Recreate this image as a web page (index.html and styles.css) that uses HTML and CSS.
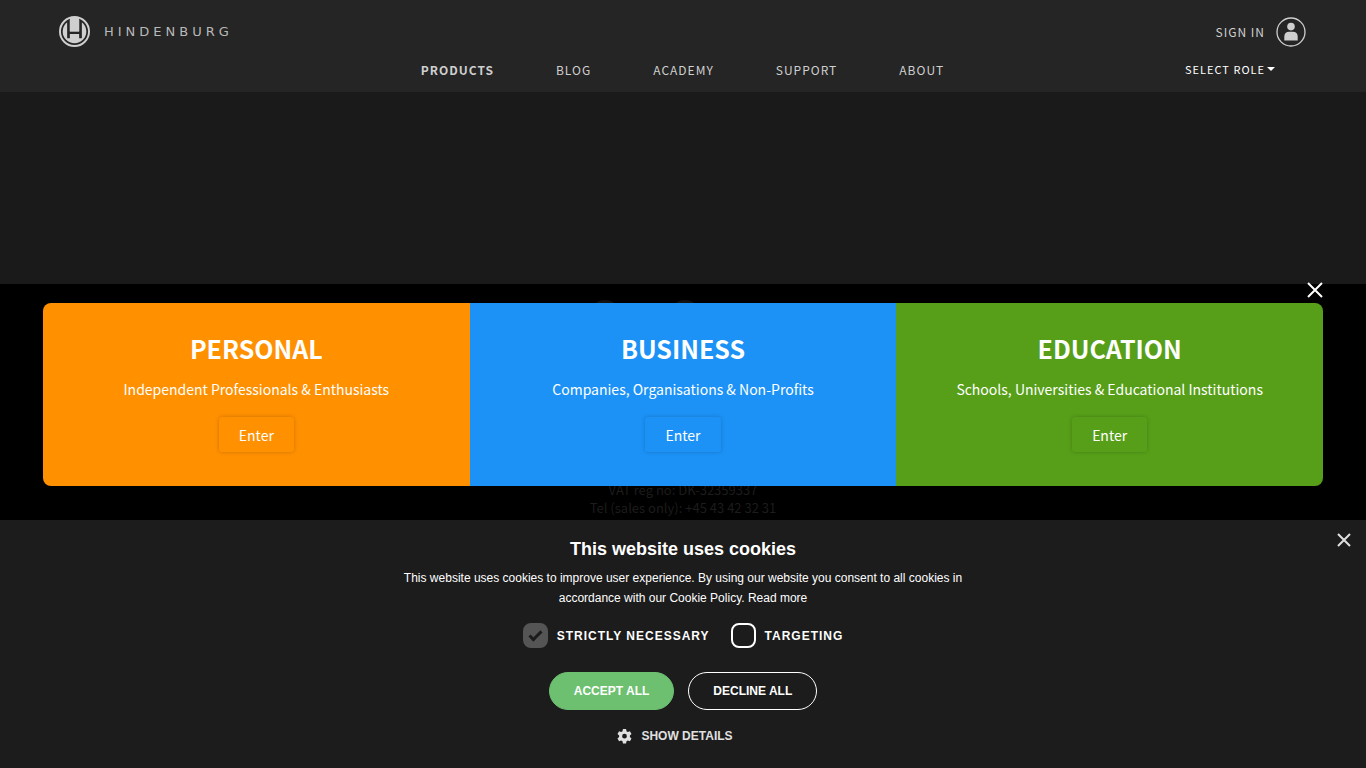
FILE: index.html
```html
<!DOCTYPE html>
<html lang="en">

<head>
    <title>Hindenburg</title>
    <meta charset="utf-8">
    <meta name="viewport" content="width=device-width, initial-scale=1.0">
    <link rel="stylesheet" href="styles.css">
</head>

<body>

    <header class="site-header">
        <div class="top-row">
            <a class="logo" href="#">
                <svg class="logo-mark" viewBox="0 0 32 32">
                    <circle cx="16" cy="16" r="15" fill="none" stroke="#cfcfcf" stroke-width="2" />
                    <circle cx="16" cy="16" r="12.2" fill="#cfcfcf" />
                    <path d="M9.8 5v18M22.2 5v18M9.8 17.3h12.4" fill="none" stroke="#252525" stroke-width="2.8" />
                    <path d="M11.2 1.5h9.6v14.4h-9.6z" fill="#cfcfcf" />
                </svg>
                <span class="wordmark">HINDENBURG</span>
            </a>
            <a class="sign-in" href="#">
                SIGN IN
                <svg class="avatar" viewBox="0 0 30 30">
                    <circle cx="15" cy="15" r="14" fill="none" stroke="#cfcfcf" stroke-width="1.3" />
                    <circle cx="15" cy="9.6" r="3.8" fill="#cfcfcf" />
                    <path d="M8.3 23.6v-3.8q0-5 5-5h3.4q5 0 5 5v3.8z" fill="#cfcfcf" />
                </svg>
            </a>
        </div>
        <div class="nav-row">
            <nav>
                <a class="active" href="#">PRODUCTS</a>
                <a href="#">BLOG</a>
                <a href="#">ACADEMY</a>
                <a href="#">SUPPORT</a>
                <a href="#">ABOUT</a>
            </nav>
            <button class="role-btn" type="button">SELECT ROLE<span class="caret"></span></button>
        </div>
    </header>

    <main></main>

    <footer>
        <div class="social">
            <span class="dot"></span>
            <span class="dot"></span>
        </div>
        <div class="company">
            <p>VAT reg no: DK-32359337</p>
            <p>Tel (sales only): +45 43 42 32 31</p>
        </div>
    </footer>

    <!-- role picker -->
    <div class="overlay">
        <div class="picker">
            <button class="close" type="button" aria-label="Close">
                <svg viewBox="0 0 16 16"><path d="M1 1l14 14M15 1L1 15" /></svg>
            </button>
            <div class="roles">
                <section class="role personal">
                    <h2>PERSONAL</h2>
                    <p>Independent Professionals &amp; Enthusiasts</p>
                    <button type="button">Enter</button>
                </section>
                <section class="role business">
                    <h2>BUSINESS</h2>
                    <p>Companies, Organisations &amp; Non-Profits</p>
                    <button type="button">Enter</button>
                </section>
                <section class="role education">
                    <h2>EDUCATION</h2>
                    <p>Schools, Universities &amp; Educational Institutions</p>
                    <button type="button">Enter</button>
                </section>
            </div>
        </div>
    </div>

    <!-- cookie banner -->
    <div class="cookies">
        <button class="cookies-close" type="button" aria-label="Close">
            <svg viewBox="0 0 14 14"><path d="M1 1l12 12M13 1L1 13" /></svg>
        </button>
        <h3>This website uses cookies</h3>
        <p>This website uses cookies to improve user experience. By using our website you consent to all cookies in accordance with our Cookie Policy. <a href="#">Read more</a></p>
        <div class="options">
            <label><input type="checkbox" checked disabled>STRICTLY NECESSARY</label>
            <label><input type="checkbox">TARGETING</label>
        </div>
        <div class="actions">
            <button class="accept" type="button">ACCEPT ALL</button>
            <button class="decline" type="button">DECLINE ALL</button>
        </div>
        <button class="details" type="button">
            <svg viewBox="0 0 24 24">
                <path fill-rule="evenodd" d="M9.5 0h5l.7 3.4 2.2 1.3 3.3-1.1 2.5 4.3-2.6 2.3v2.6l2.6 2.3-2.5 4.3-3.3-1.1-2.2 1.3-.7 3.4h-5l-.7-3.4-2.2-1.3-3.3 1.1L.8 15.1l2.6-2.3v-2.6L.8 7.9l2.5-4.3 3.3 1.1 2.2-1.3zM12 7.7a3.8 3.8 0 1 0 0 7.6a3.8 3.8 0 1 0 0-7.6z" />
            </svg>
            SHOW DETAILS
        </button>
    </div>

</body>

</html>
```
FILE: styles.css
```css
* {
    box-sizing: border-box;
}

body {
    margin: 0;
    background: #000;
    color: #cfcfcf;
    font-family: "Noto Sans CJK SC", sans-serif;
}

a {
    color: inherit;
    text-decoration: none;
}

h2,
h3,
p {
    margin: 0;
}

button {
    padding: 0;
    border: none;
    background: none;
    color: inherit;
    font: inherit;
    cursor: pointer;
}

svg {
    display: block;
}

.site-header {
    height: 92px;
    padding: 16px 60px 0 59px;
    background: #252525;
    font-size: 12px;
    line-height: 20px;
    letter-spacing: 1px;
}

.top-row {
    display: flex;
    justify-content: space-between;
    align-items: center;
}

.logo {
    display: flex;
    align-items: center;
    gap: 14px;
}

.logo-mark {
    width: 31px;
    height: 31px;
}

.wordmark {
    color: #b8b8b8;
    font-family: "DejaVu Sans", sans-serif;
    font-size: 13px;
    letter-spacing: 4px;
}

.sign-in {
    display: flex;
    align-items: center;
    gap: 11px;
    padding-top: 1px;
}

.avatar {
    width: 30px;
    height: 30px;
}

.nav-row {
    display: grid;
    grid-template-columns: 1fr auto 1fr;
    align-items: center;
    margin-top: 13px;
}

nav {
    grid-column: 2;
    display: flex;
    gap: 62px;
}

nav .active {
    font-weight: bold;
}

.role-btn {
    display: flex;
    align-items: center;
    align-self: start;
    justify-self: end;
    gap: 2px;
    margin-right: 31px;
    color: #fff;
    font-size: 11px;
    line-height: 18px;
    letter-spacing: 1px;
}

.caret {
    border: 4px solid transparent;
    border-top-color: #fff;
    border-bottom: none;
}

main {
    height: 192px;
    background: #1a1a1a;
}

footer {
    padding-top: 16px;
    color: #1c1c1c;
    font-size: 13px;
    line-height: 18px;
    text-align: center;
}

.social {
    display: flex;
    justify-content: center;
    gap: 50px;
    padding-right: 76px;
}

.dot {
    width: 30px;
    height: 30px;
    border-radius: 50%;
    background: #141414;
}

.company {
    margin-top: 151px;
}

.overlay {
    position: fixed;
    inset: 0;
    display: flex;
    align-items: center;
    justify-content: center;
    color: #fff;
}

.picker {
    display: flex;
    flex-direction: column;
    gap: 5px;
    width: calc(100% - 86px);
}

.close {
    align-self: flex-end;
}

.close svg {
    width: 16px;
    height: 16px;
    fill: none;
    stroke: #fff;
    stroke-width: 2;
}

.roles {
    display: grid;
    grid-template-columns: 1fr 1fr 1fr;
    border-radius: 8px;
    overflow: hidden;
}

.role {
    display: flex;
    flex-direction: column;
    align-items: center;
    padding: 27px 16px 34px;
    font-size: 14px;
    line-height: 24px;
    text-align: center;
}

.role h2 {
    font-size: 25px;
    line-height: 36px;
}

.role p {
    margin: 11px 0 16px;
}

.role button {
    height: 35px;
    padding: 0 20px;
    border-radius: 3px;
    box-shadow: 0 0 4px rgba(0, 0, 0, 0.2);
}

.personal,
.personal button {
    background: #ff9000;
}

.business,
.business button {
    background: #1c92f7;
}

.education,
.education button {
    background: #579f19;
}

.cookies {
    position: fixed;
    bottom: 0;
    left: 0;
    right: 0;
    display: flex;
    flex-direction: column;
    align-items: center;
    padding: 16px 16px 22px;
    background: #1c1c1c;
    color: #fff;
    font-family: "Liberation Sans", sans-serif;
    font-size: 12px;
    line-height: 20px;
}

.cookies h3 {
    font-size: 18px;
    line-height: 26px;
}

.cookies p {
    max-width: 600px;
    margin-top: 6px;
    text-align: center;
}

.cookies-close {
    position: absolute;
    top: 13px;
    right: 15px;
}

.cookies-close svg {
    width: 14px;
    height: 14px;
    fill: none;
    stroke: #e0e0e0;
    stroke-width: 2;
}

.options {
    display: flex;
    gap: 21px;
    margin-top: 15px;
    font-weight: bold;
    letter-spacing: 1px;
}

.options label {
    display: flex;
    align-items: center;
    gap: 9px;
}

.options input {
    appearance: none;
    width: 25px;
    height: 25px;
    margin: 0;
    border: 2px solid #fff;
    border-radius: 8px;
}

.options input:checked {
    display: grid;
    place-items: center;
    border-color: #555;
    background: #555;
}

.options input:checked::before {
    content: "";
    width: 10px;
    height: 4px;
    margin-bottom: 3px;
    border: solid #1c1c1c;
    border-width: 0 0 3px 3px;
    transform: rotate(-45deg);
}

.actions {
    display: flex;
    gap: 14px;
    margin-top: 24px;
}

.actions button {
    height: 38px;
    padding: 0 24px;
    border: 1px solid #fff;
    border-radius: 19px;
    font-weight: bold;
}

.actions .accept {
    border-color: #6cc070;
    background: #6cc070;
}

.details {
    display: flex;
    align-items: center;
    gap: 9px;
    margin: 16px 16px 0 0;
    color: #e0e0e0;
    font-weight: bold;
}

.details svg {
    width: 15px;
    height: 15px;
    fill: #e0e0e0;
}
```
